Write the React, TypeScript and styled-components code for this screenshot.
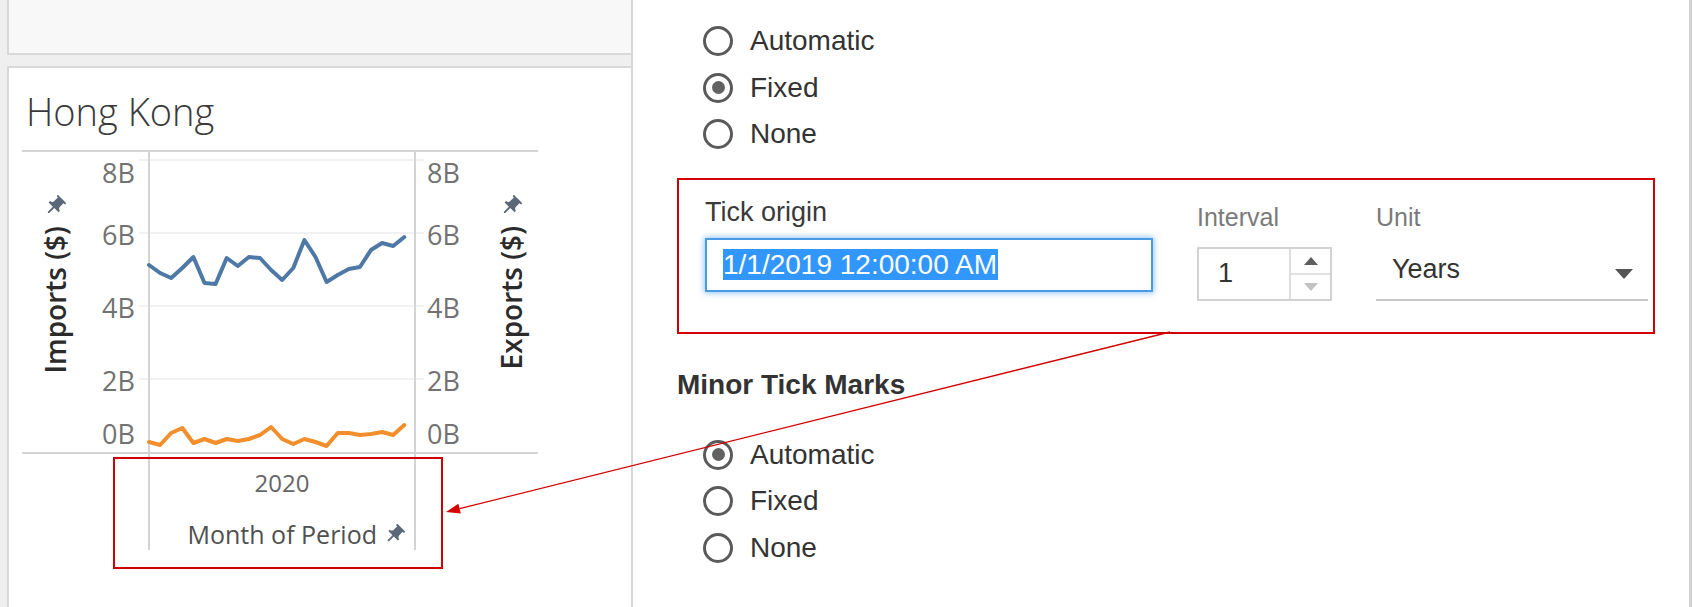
import React from "react";
import styled, { createGlobalStyle } from "styled-components";

const GlobalStyle = createGlobalStyle`
  html, body {
    margin: 0;
    padding: 0;
    background: #ffffff;
  }
  body {
    width: 1692px;
    height: 607px;
    overflow: hidden;
    font-family: "Liberation Sans", Arial, sans-serif;
  }
  * {
    box-sizing: border-box;
  }
`;

// monthly values, as y offsets inside the plot (0B sits at 300, 1B = 36.5px)
const imports = [
  113, 121, 126, 116, 105, 131, 132, 106, 114, 105, 106, 118, 128, 116, 88,
  105, 130, 123, 117, 115, 98, 91, 94, 85,
];
const exports = [
  290, 293, 281, 276, 291, 287, 291, 287, 289, 287, 283, 275, 287, 292, 287,
  290, 294, 281, 281, 283, 282, 280, 283, 273,
];

const toPoints = (values: number[]) =>
  values.map((y, i) => `${(-1 + i * 11.1).toFixed(1)},${y}`).join(" ");

const ticks = [
  { label: "8B", y: 20, grid: 8 },
  { label: "6B", y: 82, grid: 81 },
  { label: "4B", y: 155, grid: 154 },
  { label: "2B", y: 228, grid: 227 },
  { label: "0B", y: 281, grid: 300 },
];

const Pin = ({ size = 22 }: { size?: number }) => (
  <svg width={size} height={size} viewBox="0 0 24 24">
    <g transform="rotate(45 12 12)">
      <path
        d="M16 9V4h1c.55 0 1-.45 1-1s-.45-1-1-1H7c-.55 0-1 .45-1 1s.45 1 1 1h1v5c0 1.66-1.34 3-3 3v2h5.97v7l1 1 1-1v-7H19v-2c-1.66 0-3-1.34-3-3z"
        fill="#5b6877"
      />
    </g>
  </svg>
);

const Radio = ({ label, checked }: { label: string; checked?: boolean }) => (
  <RadioRow>
    <RadioCircle $checked={checked} />
    {label}
  </RadioRow>
);

const App = () => {
  return (
    <Page>
      <GlobalStyle />
      <LeftColumn>
        <TopPanel />
        <VizPanel>
          <VizTitle>Hong Kong</VizTitle>
          <Chart>
            <PlotRow>
              <AxisTitleCol $width={73} $shift={-4}>
                <Pin size={24} />
                <AxisTitle>Imports ($)</AxisTitle>
              </AxisTitleCol>
              <svg width={53} height={300}>
                {ticks.map((t) => (
                  <g key={t.label}>
                    {t.grid < 300 && (
                      <line x1={44} x2={53} y1={t.grid} y2={t.grid} stroke="#ececec" strokeWidth={1.5} />
                    )}
                    <TickText x={40} y={t.y} textAnchor="end" dominantBaseline="central">
                      {t.label}
                    </TickText>
                  </g>
                ))}
              </svg>
              <Plot>
                <svg width={264} height={300} style={{ overflow: "visible" }}>
                  {ticks
                    .filter((t) => t.grid < 300)
                    .map((t) => (
                      <line key={t.label} x1={0} x2={264} y1={t.grid} y2={t.grid} stroke="#ececec" strokeWidth={1.5} />
                    ))}
                  <polyline
                    points={toPoints(imports)}
                    fill="none"
                    stroke="#4e79a7"
                    strokeWidth={4}
                    strokeLinejoin="round"
                    strokeLinecap="round"
                  />
                  <polyline
                    points={toPoints(exports)}
                    fill="none"
                    stroke="#f28e2b"
                    strokeWidth={4}
                    strokeLinejoin="round"
                    strokeLinecap="round"
                  />
                </svg>
              </Plot>
              <svg width={62} height={300}>
                {ticks.map((t) => (
                  <g key={t.label}>
                    {t.grid < 300 && (
                      <line x1={0} x2={8} y1={t.grid} y2={t.grid} stroke="#ececec" strokeWidth={1.5} />
                    )}
                    <TickText x={11} y={t.y} dominantBaseline="central">
                      {t.label}
                    </TickText>
                  </g>
                ))}
              </svg>
              <AxisTitleCol $width={60} $shift={3}>
                <Pin size={24} />
                <AxisTitle>Exports ($)</AxisTitle>
              </AxisTitleCol>
            </PlotRow>
            <XAxisRow>
              <XAxisCell>
                <YearLabel>2020</YearLabel>
                <XTitle>
                  Month of Period
                  <Pin size={23} />
                </XTitle>
              </XAxisCell>
            </XAxisRow>
          </Chart>
        </VizPanel>
      </LeftColumn>

      <RightPanel>
        <RadioGroup>
          <Radio label="Automatic" />
          <Radio label="Fixed" checked />
          <Radio label="None" />
        </RadioGroup>

        <HighlightBox>
          <Field>
            <FieldLabel>Tick origin</FieldLabel>
            <DateInput>
              <Selection>1/1/2019 12:00:00 AM</Selection>
            </DateInput>
          </Field>
          <Field $offset>
            <SubLabel>Interval</SubLabel>
            <Spinner>
              <SpinValue>1</SpinValue>
              <SpinButtons>
                <SpinButton $divider>
                  <Triangle $dir="up" />
                </SpinButton>
                <SpinButton>
                  <Triangle $dir="down" $muted />
                </SpinButton>
              </SpinButtons>
            </Spinner>
          </Field>
          <Field $offset>
            <SubLabel>Unit</SubLabel>
            <Select>
              Years
              <Caret />
            </Select>
          </Field>
        </HighlightBox>

        <SectionTitle>Minor Tick Marks</SectionTitle>
        <RadioGroup $top={31}>
          <Radio label="Automatic" checked />
          <Radio label="Fixed" />
          <Radio label="None" />
        </RadioGroup>
      </RightPanel>

      <Annotations>
        <CalloutBox />
        <svg width={1692} height={607}>
          <line x1={1170} y1={332} x2={459.6} y2={508.6} stroke="#d40000" strokeWidth={1.3} />
          <polygon points="446,512 460.8,513.5 458.4,503.8" fill="#d40000" />
        </svg>
      </Annotations>
    </Page>
  );
};

export default App;

const Page = styled.div`
  position: relative;
  display: flex;
  width: 1692px;
  height: 607px;
  background: #ffffff;
`;

const LeftColumn = styled.div`
  width: 633px;
  flex: none;
  display: flex;
  flex-direction: column;
  gap: 11px;
  padding-left: 7px;
  background: #efefef;
  border-right: 2px solid #d6d6d6;
`;

const TopPanel = styled.div`
  height: 55px;
  flex: none;
  background: #f8f8f8;
  border-left: 2px solid #d9d9d9;
  border-bottom: 2px solid #d9d9d9;
`;

const VizPanel = styled.div`
  flex: 1;
  background: #ffffff;
  border-left: 2px solid #d9d9d9;
  border-top: 2px solid #d9d9d9;
  padding-top: 18px;
`;

const VizTitle = styled.h1`
  margin: 0;
  padding-left: 17px;
  font-family: "Open Sans", sans-serif;
  font-weight: 300;
  font-size: 38px;
  line-height: 50px;
  color: #3a3a3a;
`;

const Chart = styled.div`
  width: 516px;
  margin: 14px 0 0 13px;
  border-top: 2px solid #d4d4d4;
`;

const PlotRow = styled.div`
  display: flex;
  height: 302px;
  border-bottom: 2px solid #d4d4d4;
`;

const AxisTitleCol = styled.div<{ $width: number; $shift: number }>`
  width: ${(p) => p.$width}px;
  flex: none;
  display: flex;
  flex-direction: column;
  align-items: center;
  gap: 8px;
  padding-top: 42px;
  padding-left: ${(p) => Math.max(p.$shift, 0) * 2}px;
  padding-right: ${(p) => Math.max(-p.$shift, 0) * 2}px;
`;

const AxisTitle = styled.span`
  writing-mode: vertical-rl;
  transform: rotate(180deg);
  font-family: "Open Sans", sans-serif;
  font-weight: 600;
  font-size: 28px;
  line-height: 30px;
  color: #2b2b2b;
  white-space: nowrap;
`;

const TickText = styled.text`
  font-family: "Open Sans", sans-serif;
  font-size: 27px;
  fill: #727272;
`;

const Plot = styled.div`
  width: 268px;
  flex: none;
  border-left: 2px solid #d4d4d4;
  border-right: 2px solid #d4d4d4;
`;

const XAxisRow = styled.div`
  display: flex;
  padding-left: 126px;
`;

const XAxisCell = styled.div`
  width: 268px;
  height: 96px;
  display: flex;
  flex-direction: column;
  align-items: center;
  padding-top: 14px;
  border-left: 2px solid #d4d4d4;
  border-right: 2px solid #d4d4d4;
  font-family: "Open Sans", sans-serif;
`;

const YearLabel = styled.div`
  font-size: 24px;
  line-height: 30px;
  color: #666666;
`;

const XTitle = styled.div`
  align-self: stretch;
  display: flex;
  align-items: center;
  justify-content: flex-end;
  gap: 6px;
  margin-top: 21px;
  padding-right: 8px;
  font-size: 25px;
  line-height: 30px;
  color: #505050;
`;

const RightPanel = styled.div`
  flex: 1;
  display: flex;
  flex-direction: column;
  align-items: flex-start;
  padding-left: 44px;
  background: #ffffff;
  border-right: 3px solid #d2d2d2;
`;

const RadioGroup = styled.div<{ $top?: number }>`
  display: flex;
  flex-direction: column;
  margin: ${(p) => p.$top ?? 18}px 0 0 26px;
`;

const RadioRow = styled.label`
  display: flex;
  align-items: center;
  gap: 17px;
  height: 46.5px;
  font-size: 28px;
  color: #333333;
`;

const RadioCircle = styled.span<{ $checked?: boolean }>`
  width: 30px;
  height: 30px;
  flex: none;
  border-radius: 50%;
  border: 3px solid #5a5a5a;
  display: flex;
  align-items: center;
  justify-content: center;

  &::after {
    content: "";
    display: ${(p) => (p.$checked ? "block" : "none")};
    width: 13px;
    height: 13px;
    border-radius: 50%;
    background: #626262;
  }
`;

const HighlightBox = styled.div`
  width: 978px;
  margin-top: 20px;
  display: flex;
  gap: 44px;
  padding: 17px 5px 31px 26px;
  border: 2px solid #d10000;
`;

const Field = styled.div<{ $offset?: boolean }>`
  display: flex;
  flex-direction: column;
  margin-top: ${(p) => (p.$offset ? 5 : 0)}px;
`;

const FieldLabel = styled.div`
  font-size: 27px;
  line-height: 30px;
  color: #3a3a3a;
`;

const SubLabel = styled.div`
  font-size: 25px;
  line-height: 30px;
  color: #7a7a7a;
`;

const DateInput = styled.div`
  width: 448px;
  height: 54px;
  margin-top: 11px;
  display: flex;
  align-items: center;
  padding-left: 16px;
  border: 2px solid #4a9be6;
  box-shadow: 0 0 6px 1px rgba(64, 150, 240, 0.55);
  font-size: 28px;
`;

const Selection = styled.span`
  background: #3297fd;
  color: #ffffff;
  line-height: 31px;
  padding-right: 1px;
`;

const Spinner = styled.div`
  width: 135px;
  height: 54px;
  margin-top: 15px;
  display: flex;
  border: 2px solid #d2d2d2;
`;

const SpinValue = styled.div`
  flex: 1;
  display: flex;
  align-items: center;
  padding-left: 19px;
  font-size: 27px;
  color: #333333;
`;

const SpinButtons = styled.div`
  width: 41px;
  display: flex;
  flex-direction: column;
  border-left: 2px solid #dedede;
`;

const SpinButton = styled.div<{ $divider?: boolean }>`
  flex: 1;
  display: flex;
  align-items: center;
  justify-content: center;
  border-bottom: ${(p) => (p.$divider ? "2px solid #e2e2e2" : "none")};
`;

const Triangle = styled.span<{ $dir: "up" | "down"; $muted?: boolean }>`
  width: 0;
  height: 0;
  border-left: 7px solid transparent;
  border-right: 7px solid transparent;
  ${(p) =>
    p.$dir === "up"
      ? `border-bottom: 8px solid ${p.$muted ? "#c2c2c2" : "#5e5e5e"};`
      : `border-top: 8px solid ${p.$muted ? "#c2c2c2" : "#5e5e5e"};`}
`;

const Select = styled.div`
  width: 272px;
  height: 60px;
  margin-top: 9px;
  display: flex;
  align-items: center;
  justify-content: space-between;
  padding: 0 15px 0 16px;
  border-bottom: 2px solid #c8c8c8;
  font-size: 27px;
  color: #333333;
`;

const Caret = styled.span`
  width: 0;
  height: 0;
  margin-top: 8px;
  border-left: 9px solid transparent;
  border-right: 9px solid transparent;
  border-top: 10px solid #555555;
`;

const SectionTitle = styled.div`
  margin-top: 35px;
  font-size: 28px;
  font-weight: 700;
  line-height: 32px;
  color: #333333;
`;

const Annotations = styled.div`
  position: absolute;
  inset: 0;
  pointer-events: none;

  svg {
    position: absolute;
    left: 0;
    top: 0;
  }
`;

const CalloutBox = styled.div`
  position: absolute;
  left: 113px;
  top: 457px;
  width: 330px;
  height: 112px;
  border: 2px solid #d10000;
`;
